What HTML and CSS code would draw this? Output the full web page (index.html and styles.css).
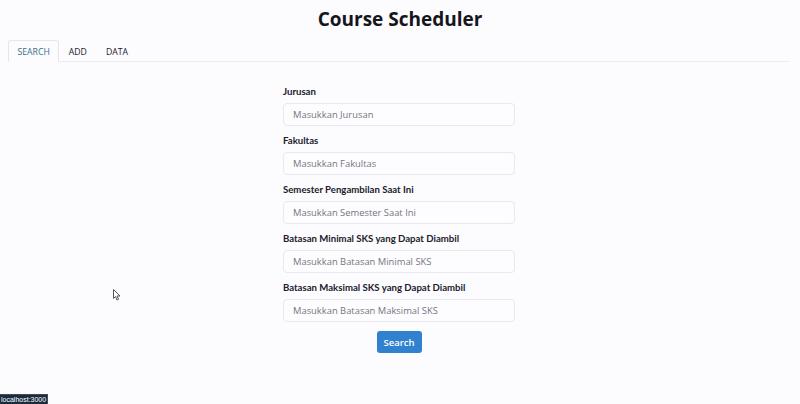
FILE: index.html
```html
<!DOCTYPE html>
<html lang="id">
<head>
<meta charset="utf-8">
<title>Course Scheduler</title>
<link rel="stylesheet" href="styles.css">
</head>
<body>
<h1 class="title">Course Scheduler</h1>
<div class="tabs">
  <div class="tablist">
    <button class="tab active">SEARCH</button>
    <button class="tab">ADD</button>
    <button class="tab">DATA</button>
  </div>
</div>
<form class="form">
  <div class="field">
    <label>Jurusan</label>
    <input type="text" placeholder="Masukkan Jurusan">
  </div>
  <div class="field">
    <label>Fakultas</label>
    <input type="text" placeholder="Masukkan Fakultas">
  </div>
  <div class="field">
    <label>Semester Pengambilan Saat Ini</label>
    <input type="text" placeholder="Masukkan Semester Saat Ini">
  </div>
  <div class="field">
    <label>Batasan Minimal SKS yang Dapat Diambil</label>
    <input type="text" placeholder="Masukkan Batasan Minimal SKS">
  </div>
  <div class="field">
    <label>Batasan Maksimal SKS yang Dapat Diambil</label>
    <input type="text" placeholder="Masukkan Batasan Maksimal SKS">
  </div>
  <button type="button" class="submit">Search</button>
</form>
<svg class="cursor" width="8" height="12" viewBox="0 0 8 12"><path d="M0.5 0.5 L0.5 9.5 L2.5 7.5 L4 11 L5.5 10.3 L4 7 L7 7 Z" fill="#fff" stroke="#555" stroke-width="1"/></svg>
<div class="status">localhost:3000</div>
</body>
</html>
```
FILE: styles.css
```css
html, body {
  margin: 0;
  padding: 0;
  background: #fcfbfe;
  font-family: "Open Sans", "Noto Sans", sans-serif;
  color: #1a202c;
  height: 404px;
  overflow: hidden;
}
.title {
  margin: 0;
  padding-top: 5px;
  height: 40px;
  box-sizing: border-box;
  text-align: center;
  font-size: 19px;
  font-weight: 700;
  line-height: 28px;
  color: #15151c;
}
.tabs {
  padding: 0 10px 0 8px;
}
.tablist {
  display: flex;
  border-bottom: 1px solid #eeeef2;
}
.tab {
  background: none;
  border: 1px solid transparent;
  border-bottom: none;
  border-radius: 3px 3px 0 0;
  font-family: inherit;
  font-size: 8.7px;
  color: #1a202c;
  height: 22px;
  padding: 0 8.5px;
  margin-bottom: -1px;
  cursor: pointer;
}
.tab.active {
  color: #3b6d8c;
  border-color: #e6e6ec;
  background: #fcfbfe;
}
.form {
  width: 232px;
  margin: 23px 0 0 calc(50% - 117px);
  display: flex;
  flex-direction: column;
}
.field {
  display: flex;
  flex-direction: column;
  margin-bottom: 8px;
}
.field label {
  font-family: "Lato", "Open Sans", sans-serif;
  font-size: 9.6px;
  font-weight: 700;
  line-height: 14px;
  margin-bottom: 4px;
  color: #1a202c;
}
.field input {
  height: 23px;
  box-sizing: border-box;
  border: 1px solid #e8e8ee;
  border-radius: 4px;
  background: #fdfdff;
  padding: 0 9px;
  font-family: inherit;
  font-size: 9.4px;
  color: #1a202c;
  outline: none;
}
.field input::placeholder {
  color: #75757f;
}
.submit {
  align-self: center;
  margin-top: 1px;
  width: 45px;
  height: 22px;
  border: none;
  border-radius: 3px;
  background: #3182ce;
  color: #fff;
  font-family: inherit;
  font-size: 9.5px;
  font-weight: 600;
  cursor: pointer;
}
.cursor {
  position: absolute;
  left: 113px;
  top: 289px;
}
.status {
  position: absolute;
  left: 0;
  bottom: 0;
  background: #1b2a3d;
  color: #fff;
  font-family: "Liberation Sans", sans-serif;
  font-size: 7px;
  line-height: 9px;
  padding: 0 1px 0 1px;
  border: 1px solid #3d4a5c;
  border-bottom: none;
  border-left: none;
}
```
